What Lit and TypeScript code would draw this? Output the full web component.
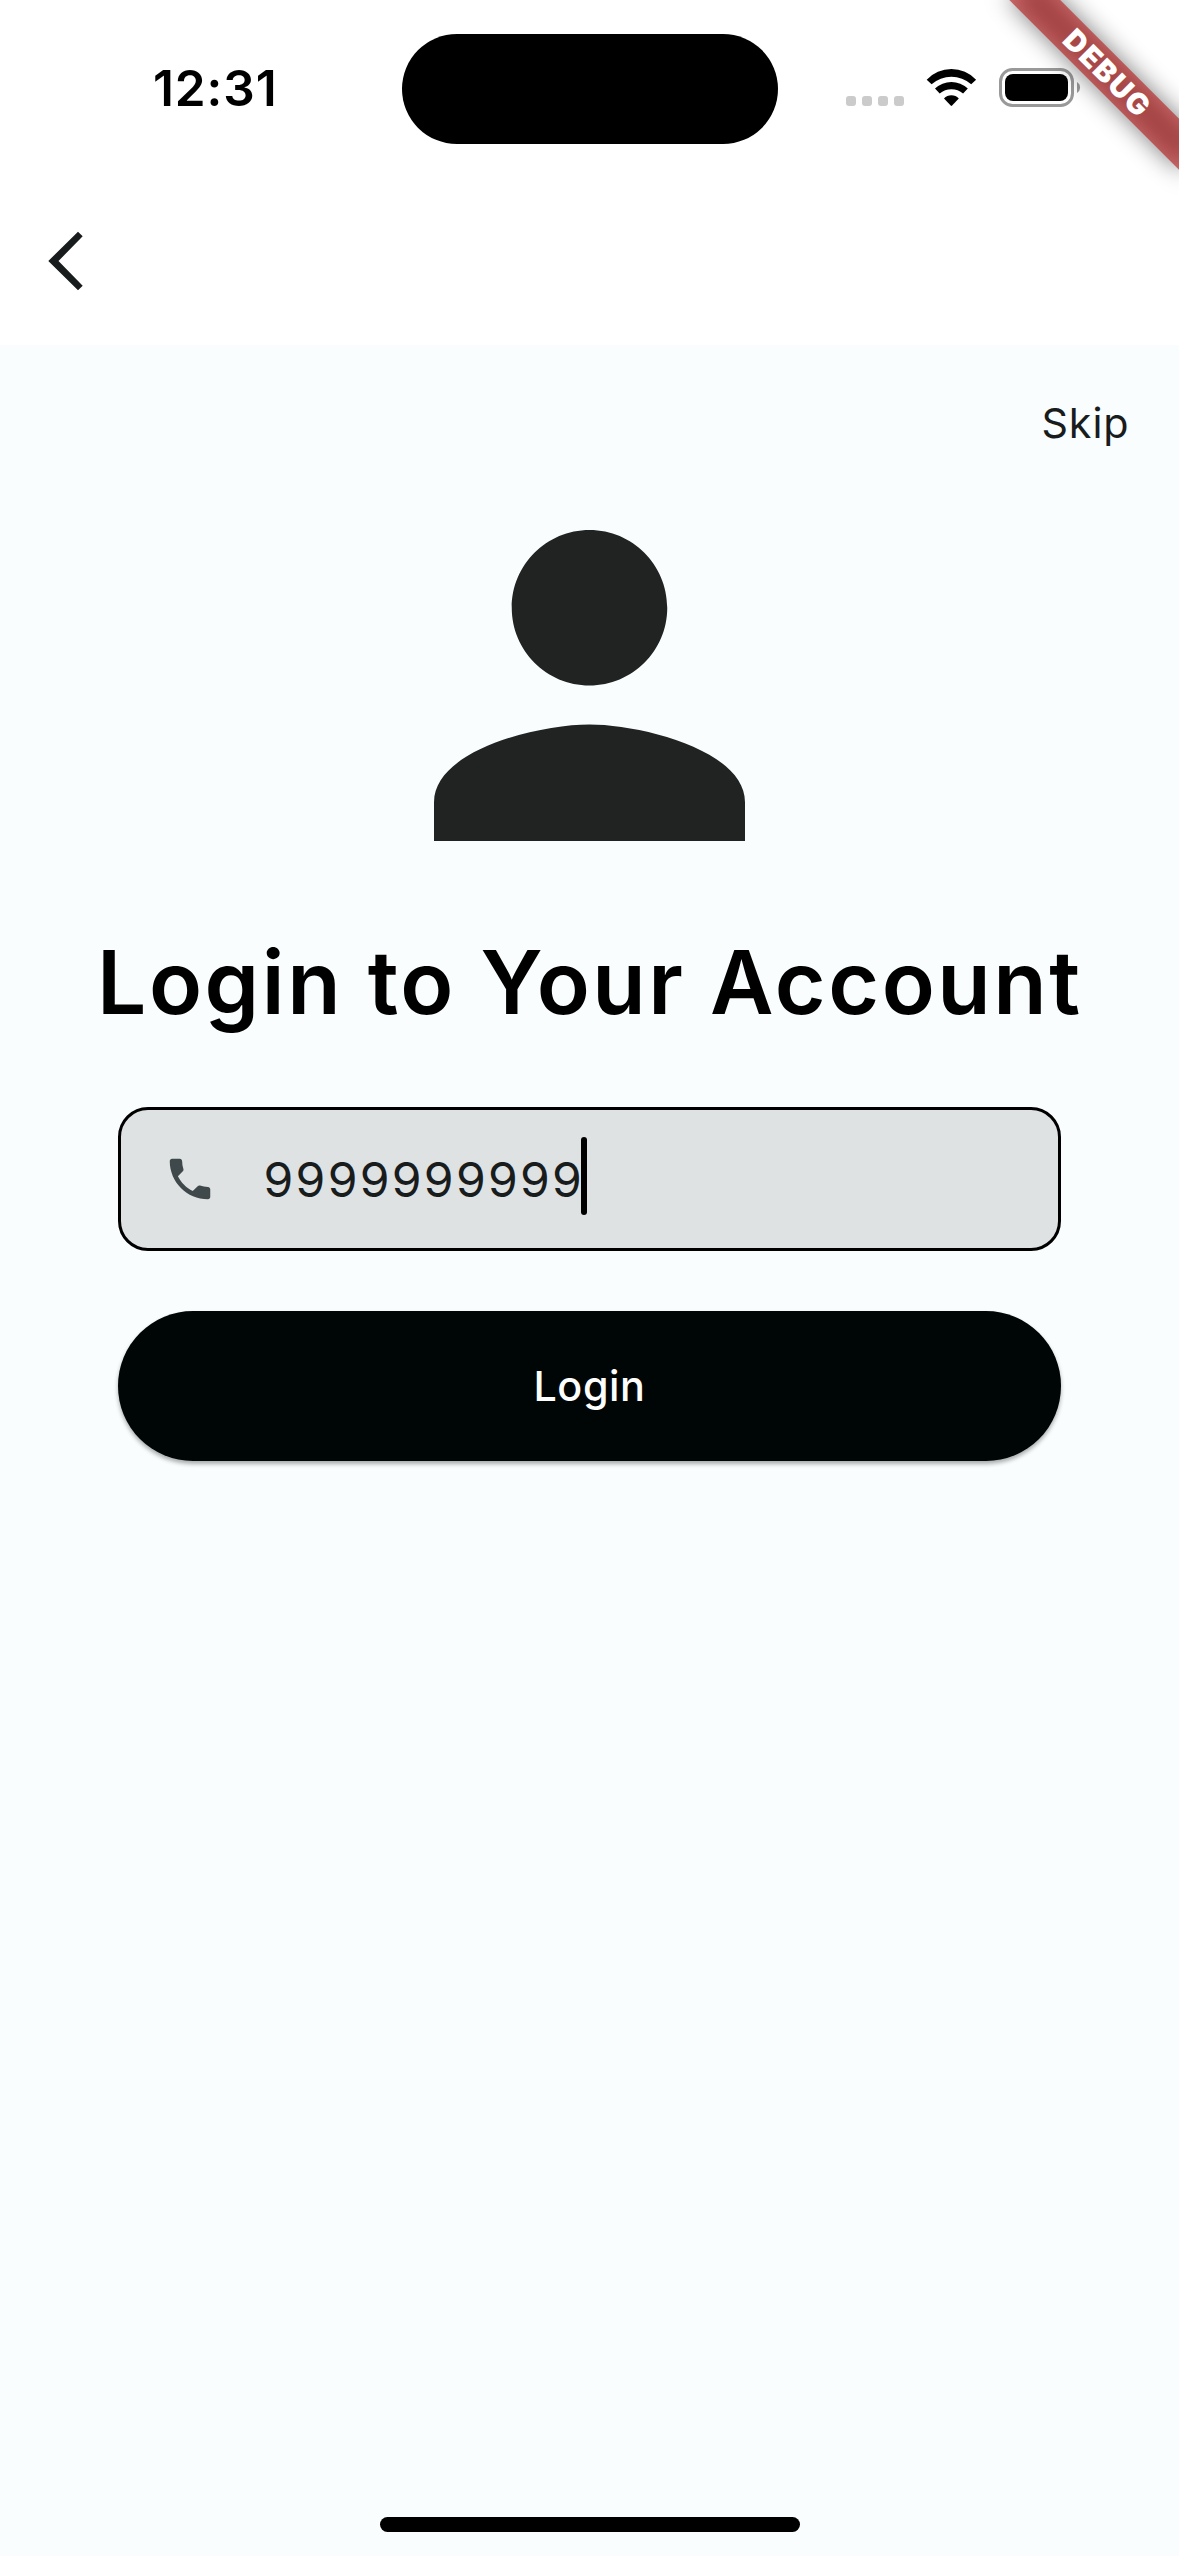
import { LitElement, html, css } from "lit";
import { customElement, property } from "lit/decorators.js";

@customElement("status-bar")
export class StatusBar extends LitElement {
  @property() time = "";

  static styles = css`
    :host {
      display: grid;
      grid-template-columns: 402px 376px 1fr;
      height: 177px;
      color: #000;
    }
    .time {
      padding: 58px 0 0 153px;
      font-size: 49.5px;
      line-height: 60px;
      font-weight: 600;
      letter-spacing: 0.9px;
    }
    .island {
      height: 110.5px;
      margin-top: 33.5px;
      border-radius: 56px;
      background: #000;
    }
    .indicators {
      display: flex;
      align-items: flex-start;
      padding: 68px 0 0 68px;
    }
    .dots {
      display: flex;
      gap: 6px;
      padding-top: 28px;
    }
    .dot {
      width: 10px;
      height: 10px;
      border-radius: 3px;
      background: #cbcbcb;
    }
    .wifi {
      width: 52px;
      height: 39px;
      margin-left: 22px;
    }
    .battery {
      width: 84px;
      height: 39px;
      margin-left: 21px;
    }
  `;

  render() {
    return html`
      <div class="time">${this.time}</div>
      <div class="island"></div>
      <div class="indicators">
        <div class="dots">
          ${[0, 1, 2, 3].map(() => html`<span class="dot"></span>`)}
        </div>
        <svg class="wifi" viewBox="0 0 52 39">
          <path d="M.7 11.7A33.9 33.9 0 0 1 50.1 11.7L45.2 16.3A29.9 29.9 0 0 0 5.6 16.3Z" />
          <path d="M9 20.6A23.7 23.7 0 0 1 41.8 20.6L37.1 25.6A17.8 17.8 0 0 0 13.7 25.6Z" />
          <path d="M18 30.5A10.2 10.2 0 0 1 32.8 30.5L26.1 37.6Q25.4 38.3 24.7 37.6Z" />
        </svg>
        <svg class="battery" viewBox="0 0 84 39">
          <rect x="1.5" y="1.5" width="72" height="36" rx="12" fill="none" stroke="#999" stroke-width="3" />
          <rect x="6" y="6" width="63" height="27" rx="8" />
          <path d="M78 14A6.5 6.5 0 0 1 78 25Z" fill="#999" />
        </svg>
      </div>
    `;
  }
}

@customElement("debug-ribbon")
export class DebugRibbon extends LitElement {
  static styles = css`
    :host {
      position: absolute;
      top: 0;
      right: 0;
      width: 260px;
      height: 260px;
      overflow: hidden;
      pointer-events: none;
    }
    .strip {
      position: absolute;
      top: 84px;
      left: 140px;
      width: 240px;
      height: 36px;
      transform-origin: 120px -84px;
      transform: rotate(45deg);
    }
    .shadow {
      position: absolute;
      inset: 0;
      background: rgba(0, 0, 0, 0.5);
      filter: blur(12px);
    }
    .label {
      position: absolute;
      inset: 0;
      background: rgba(183, 28, 28, 0.627);
      color: #fff;
      font-size: 29.5px;
      line-height: 36px;
      font-weight: 900;
      letter-spacing: 1.5px;
      text-indent: 2.5px;
      text-align: center;
    }
  `;

  render() {
    return html`
      <div class="strip">
        <div class="shadow"></div>
        <div class="label">DEBUG</div>
      </div>
    `;
  }
}

@customElement("phone-field")
export class PhoneField extends LitElement {
  @property() value = "";

  static styles = css`
    :host {
      display: flex;
      align-items: center;
      box-sizing: border-box;
      height: 144px;
      padding-left: 42px;
      border: 3px solid #000;
      border-radius: 30px;
      background: #dfe2e3;
    }
    .icon {
      width: 54px;
      height: 54px;
      margin-right: 46.5px;
      fill: #3f484a;
    }
    .value {
      padding-top: 2px;
      font-size: 48px;
      line-height: 60px;
      font-weight: 400;
      letter-spacing: 2.3px;
      color: #191c1d;
    }
    .cursor {
      width: 6px;
      height: 78px;
      margin: -6px 0 0 -3.2px;
      border-radius: 3px;
      background: #000;
    }
  `;

  render() {
    return html`
      <svg class="icon" viewBox="0 0 24 24">
        <path d="M6.62 10.79c1.44 2.83 3.76 5.14 6.59 6.59l2.2-2.2c.27-.27.67-.36 1.02-.24 1.12.37 2.33.57 3.57.57.55 0 1 .45 1 1V20c0 .55-.45 1-1 1-9.39 0-17-7.61-17-17 0-.55.45-1 1-1h3.5c.55 0 1 .45 1 1 0 1.25.2 2.45.57 3.57.11.35.03.74-.25 1.02l-2.2 2.2z" />
      </svg>
      <span class="value">${this.value}</span>
      <span class="cursor"></span>
    `;
  }
}

@customElement("app-root")
export class AppRoot extends LitElement {
  static styles = css`
    :host {
      display: flex;
      flex-direction: column;
      position: relative;
      width: 1179px;
      height: 2556px;
      overflow: hidden;
      background: #fff;
      font-family: Inter, "Liberation Sans", sans-serif;
      color: #191c1d;
    }
    .app-bar {
      height: 168px;
      display: flex;
      align-items: center;
      box-sizing: border-box;
      padding-left: 48px;
    }
    .back {
      width: 36px;
      height: 60px;
      fill: #191c1d;
    }
    .page {
      flex: 1;
      display: flex;
      flex-direction: column;
      padding: 48px 118px 24px;
      background: #f9fdfe;
    }
    .skip {
      align-self: flex-end;
      margin-right: -68.5px;
      font-size: 41.3px;
      line-height: 60px;
      font-weight: 400;
      letter-spacing: 0.9px;
    }
    .avatar {
      align-self: center;
      width: 311px;
      height: 311px;
      margin-top: 77px;
      fill: #212322;
    }
    .title {
      margin: 87px -60px 0 -21px;
      font-size: 87.3px;
      line-height: 108px;
      font-weight: 600;
      letter-spacing: 2.55px;
      white-space: nowrap;
      color: #000;
    }
    .field {
      margin-top: 71px;
    }
    .login {
      height: 150px;
      margin: 60px 0 0;
      padding: 0;
      border: 0;
      border-radius: 75px;
      background: #000505;
      box-shadow: 0 3px 4px rgba(0, 0, 0, 0.32);
      color: #fff;
      font-family: inherit;
      font-size: 41.3px;
      font-weight: 500;
      letter-spacing: 0.6px;
    }
    .home {
      align-self: center;
      width: 420px;
      height: 15px;
      margin-top: auto;
      border-radius: 8px;
      background: #000;
    }
  `;

  render() {
    return html`
      <status-bar time="12:31"></status-bar>
      <div class="app-bar">
        <svg class="back" viewBox="0 0 36 60">
          <path d="M.3 30L30 .7L34.7 5.3L10.5 30L34.7 54.7L30 59.3Z" />
        </svg>
      </div>
      <main class="page">
        <div class="skip">Skip</div>
        <svg class="avatar" viewBox="4 4 16 16">
          <path d="M12 12c2.21 0 4-1.79 4-4s-1.79-4-4-4-4 1.79-4 4 1.79 4 4 4zm0 2c-2.67 0-8 1.34-8 4v2h16v-2c0-2.66-5.33-4-8-4z" />
        </svg>
        <div class="title">Login to Your Account</div>
        <phone-field class="field" value="9999999999"></phone-field>
        <button class="login">Login</button>
        <div class="home"></div>
      </main>
      <debug-ribbon></debug-ribbon>
    `;
  }
}
